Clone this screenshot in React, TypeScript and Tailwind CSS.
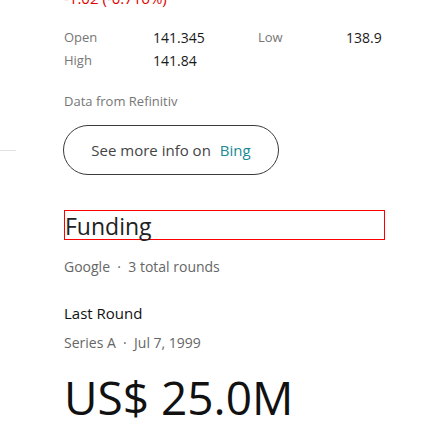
const font = { fontFamily: '"Open Sans", "Noto Sans", sans-serif' };

const stats = [
  { label: 'Open', value: '141.345', label2: 'Low', value2: '138.9' },
  { label: 'High', value: '141.84', label2: '', value2: '' },
];

const App = () => {
  return (
    <div className="w-[448px] h-[448px] overflow-hidden bg-white" style={font}>
      <div className="pl-[64px] w-[385px]">
        {/* change line, clipped at the top */}
        <div className="mt-[-12px] text-[15px] leading-[20px] text-[#e00000]">-1.02 (-0.716%)</div>

        {/* quote table */}
        <div className="mt-[18px] grid grid-cols-[89px_105px_88px_1fr]">
          {stats.map((s) => (
            <div key={s.label} className="contents">
              <span className="text-[13px] leading-[23px] text-[#767676]">{s.label}</span>
              <span className="text-[14px] leading-[23px] text-[#1a1a1a]">{s.value}</span>
              <span className="text-[13px] leading-[23px] text-[#767676]">{s.label2}</span>
              <span className="text-[14px] leading-[23px] text-[#1a1a1a]">{s.value2}</span>
            </div>
          ))}
        </div>

        <div className="mt-[19px] text-[13px] leading-[20px] text-[#767676]">Data from Refinitiv</div>

        <div className="mt-[14px] ml-[-64px] flex items-center">
          <div className="w-[16px] h-px bg-[#e3e3e3]" />
          <div className="ml-[47px] w-[216px] h-[50px] rounded-[25px] border border-solid border-[#3a3a3a] text-[15px] text-[#444] flex items-center justify-center">
            See more info on<span className="ml-[9px] text-[#1b8a96]">Bing</span>
          </div>
        </div>

        <div className="mt-[35px] h-[30px] border border-[#ff0000]">
          <h2 className="text-[23px] leading-[30px] text-[#222]">Funding</h2>
        </div>

        <div className="mt-[17px] text-[14px] leading-[20px] text-[#666]">
          Google&nbsp;&nbsp;·&nbsp;&nbsp;3 total rounds
        </div>

        <div className="mt-[26px] text-[15px] leading-[20px] font-medium text-[#111]">Last Round</div>
        <div className="mt-[10px] text-[14px] leading-[20px] text-[#666]">
          Series A&nbsp;&nbsp;·&nbsp;&nbsp;Jul 7, 1999
        </div>

        <div className="mt-[16px] text-[46px] leading-[56px] text-[#111]">US$ 25.0M</div>
      </div>
    </div>
  );
};

export default App;
